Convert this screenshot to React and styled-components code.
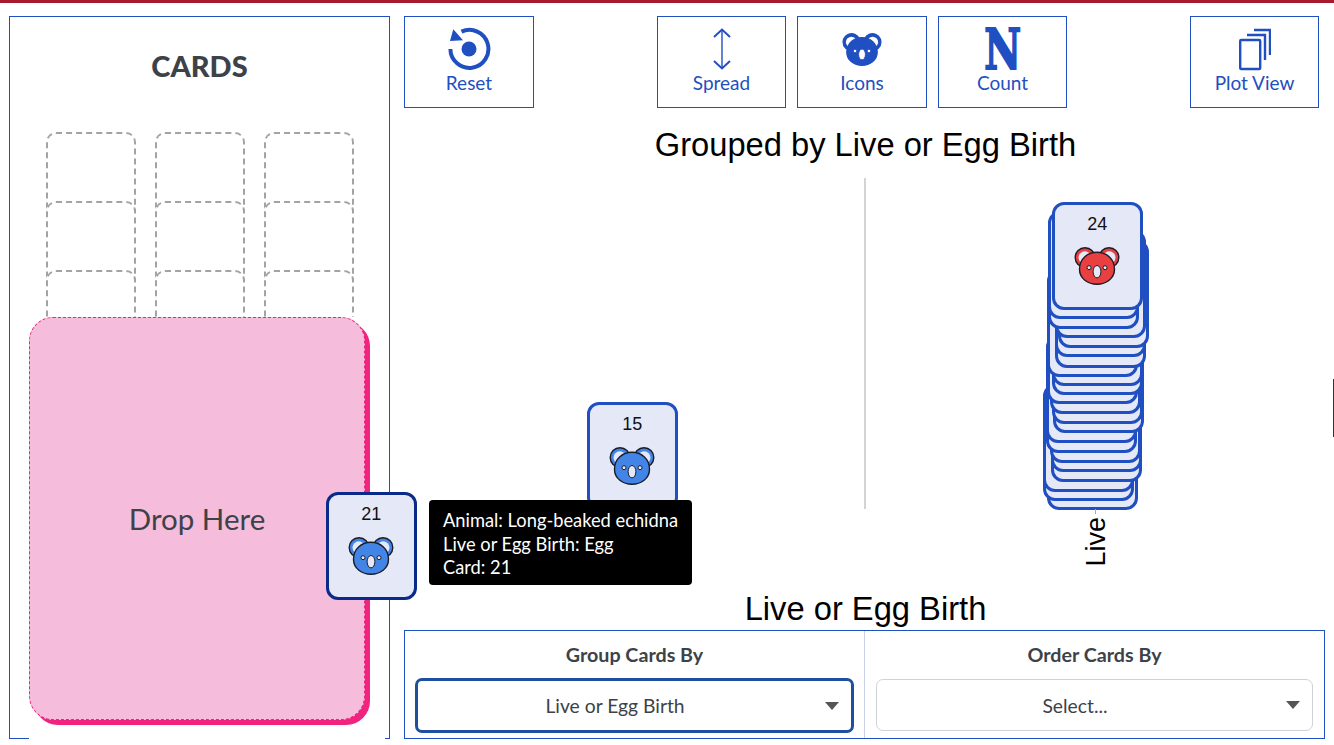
import styled, { createGlobalStyle } from "styled-components"

const BLUE = "#1f4fc0"
const INK = "#3d4248"
const UI_FONT = `Lato, "Noto Sans", sans-serif`
const CHART_FONT = `"Liberation Sans", Arial, sans-serif`

const GlobalStyle = createGlobalStyle`
  html, body {
    margin: 0;
    padding: 0;
    background: #fff;
    overflow: hidden;
  }
  * { box-sizing: border-box; }
`

// x = left edge, bottom = bottom edge, in page pixels. back of the stack first
const liveCards = [
  [1047, 509], [1043, 500], [1043, 491], [1051, 481], [1051, 471], [1050, 462],
  [1046, 452], [1046, 442], [1053, 432], [1052, 423], [1050, 413], [1047, 403],
  [1052, 394], [1052, 385], [1047, 376], [1055, 367], [1055, 356], [1058, 347],
  [1055, 337], [1048, 328], [1048, 318],
]

const LIVE_LEFT = 866

const KoalaFace = ({ color, earColor, line, width = 46, height = 38 }) => (
  <svg width={width} height={height} viewBox="0 0 46 38">
    <circle cx="11" cy="10.5" r="9.8" fill={color} stroke={line} strokeWidth="1.4" />
    <circle cx="35" cy="10.5" r="9.8" fill={color} stroke={line} strokeWidth="1.4" />
    <circle cx="10.8" cy="10.6" r="6.3" fill={earColor} />
    <circle cx="35.2" cy="10.6" r="6.3" fill={earColor} />
    <path
      d="M23 5.2C32 5.2 40.5 11.5 40.5 22.2C40.5 31.5 32 37.2 23 37.2C14 37.2 5.5 31.5 5.5 22.2C5.5 11.5 14 5.2 23 5.2Z"
      fill={color}
      stroke={line}
      strokeWidth="1.4"
    />
    <circle cx="15" cy="20.7" r="2" fill={earColor} stroke={line} strokeWidth="1" />
    <circle cx="31" cy="20.7" r="2" fill={earColor} stroke={line} strokeWidth="1" />
    <ellipse cx="23" cy="24.7" rx="3.9" ry="6.2" fill={earColor} stroke={line} strokeWidth="1" />
  </svg>
)

const ResetIcon = () => (
  <svg width="44" height="44" viewBox="0 0 44 44">
    <path d="M3.4 22A19 19 0 1 0 14.5 4.6" fill="none" stroke={BLUE} strokeWidth="4" />
    <path d="M6.3 2.3L3 14L16 13.3Z" fill={BLUE} />
    <circle cx="22" cy="22" r="7.5" fill={BLUE} />
  </svg>
)

const SpreadIcon = () => (
  <svg width="20" height="44" viewBox="0 0 20 44" fill="none" stroke={BLUE}>
    <path d="M10 3V41" strokeWidth="1.4" />
    <path d="M2 10L10 2.5L18 10M2 34L10 41.5L18 34" strokeWidth="2" />
  </svg>
)

const PlotViewIcon = () => (
  <svg width="32" height="44" viewBox="0 0 32 44" fill="none" stroke={BLUE} strokeWidth="2.4">
    <rect x="1.2" y="13" width="20" height="29" rx="1" />
    <path d="M8 8H26V33M15 3H31V28" />
  </svg>
)

const Card = ({ number, color, $x, $y, $active }) => (
  <CardBox $x={$x} $y={$y} $active={$active}>
    <CardNumber>{number}</CardNumber>
    <KoalaFace color={color} earColor="#e5e8f7" line="#1c1c28" />
  </CardBox>
)

const App = () => {
  const slots = Array.from({ length: 9 }, (_, i) => i)

  return (
    <Page>
      <GlobalStyle />
      <TopBar />
      <Main>
        <CardsPanel>
          <PanelHeading>CARDS</PanelHeading>
          <SlotGrid>
            {slots.map((s) => (
              <Slot key={s} />
            ))}
          </SlotGrid>
          <DropShell>
            <DropZone>Drop Here</DropZone>
          </DropShell>
        </CardsPanel>

        <Workspace>
          <Toolbar>
            <ToolButton $w={130}>
              <IconBox><ResetIcon /></IconBox>
              Reset
            </ToolButton>
            <ToolGroup>
              <ToolButton $w={129}>
                <IconBox><SpreadIcon /></IconBox>
                Spread
              </ToolButton>
              <ToolButton $w={130}>
                <IconBox>
                  <KoalaFace color={BLUE} earColor="#fff" line={BLUE} width={40} height={35} />
                </IconBox>
                Icons
              </ToolButton>
              <ToolButton $w={129}>
                <IconBox><CountGlyph>N</CountGlyph></IconBox>
                Count
              </ToolButton>
            </ToolGroup>
            <ToolButton $w={129}>
              <IconBox><PlotViewIcon /></IconBox>
              Plot View
            </ToolButton>
          </Toolbar>

          <ChartTitle>Grouped by Live or Egg Birth</ChartTitle>

          <Plot>
            <PlotColumn $divider>
              <Card number="15" color="#4285e6" $x={587 - 404} $y={224} />
            </PlotColumn>
            <PlotColumn>
              {liveCards.map(([x, bottom], i) => (
                <Card key={i} number="" color="#e84040" $x={x - LIVE_LEFT} $y={bottom - 107 - 178} />
              ))}
              <Card number="24" color="#e84040" $x={1052 - LIVE_LEFT} $y={24} />
              <Tick />
              <GroupLabel>Live</GroupLabel>
            </PlotColumn>
          </Plot>

          <AxisTitle>Live or Egg Birth</AxisTitle>

          <Controls>
            <ControlCell $divider>
              <ControlLabel>Group Cards By</ControlLabel>
              <SelectBox $focused>
                <SelectValue>Live or Egg Birth</SelectValue>
                <Caret />
              </SelectBox>
            </ControlCell>
            <ControlCell>
              <ControlLabel>Order Cards By</ControlLabel>
              <SelectBox>
                <SelectValue>Select...</SelectValue>
                <Caret />
              </SelectBox>
            </ControlCell>
          </Controls>
        </Workspace>
      </Main>

      <Card number="21" color="#4285e6" $x={326} $y={492} $active />
      <Tooltip>
        <div>Animal: Long-beaked echidna</div>
        <div>Live or Egg Birth: Egg</div>
        <div>Card: 21</div>
      </Tooltip>
      <EdgeMark />
    </Page>
  )
}

const Page = styled.div`
  position: relative;
  width: 1334px;
  height: 745px;
  overflow: hidden;
  font-family: ${UI_FONT};
  color: ${INK};
`

const TopBar = styled.div`
  height: 3px;
  background: #a6192e;
`

const Main = styled.div`
  display: flex;
  gap: 14px;
  padding: 13px 9px 0 9px;
`

const CardsPanel = styled.section`
  position: relative;
  width: 381px;
  height: 723px;
  border: 1px solid ${BLUE};
  display: flex;
  flex-direction: column;
  align-items: center;
`

const PanelHeading = styled.h2`
  margin: 28px 0 0;
  height: 42px;
  font-size: 29px;
  line-height: 42px;
  font-weight: 900;
  color: ${INK};
`

const SlotGrid = styled.div`
  display: grid;
  grid-template-columns: repeat(3, 90px);
  grid-auto-rows: 69px;
  column-gap: 19px;
  margin-top: 45px;
`

const Slot = styled.div`
  height: 108px;
  background: #fff;
  border: 2px dashed #a3a3a3;
  border-radius: 10px;
`

const DropShell = styled.div`
  position: absolute;
  left: 19px;
  top: 300px;
  width: 356px;
  height: 430px;
  background: #fff;
`

const DropZone = styled.div`
  width: 336px;
  height: 403px;
  display: flex;
  align-items: center;
  justify-content: center;
  background: #f5bcdb;
  border: 1px dashed #f0237f;
  border-radius: 24px;
  box-shadow: 5px 5px 0 #f0237f;
  font-size: 29.5px;
  color: ${INK};
`

const Workspace = styled.div`
  width: 921px;
  display: flex;
  flex-direction: column;
`

const Toolbar = styled.div`
  display: flex;
  justify-content: space-between;
  padding-right: 6px;
`

const ToolGroup = styled.div`
  display: flex;
  gap: 11px;
`

const ToolButton = styled.button`
  width: ${(p) => p.$w}px;
  height: 92px;
  padding: 10px 0 0;
  display: flex;
  flex-direction: column;
  align-items: center;
  background: #fff;
  border: 1px solid ${BLUE};
  border-radius: 0;
  font-family: ${UI_FONT};
  font-size: 19px;
  line-height: 23px;
  color: ${BLUE};
`

const IconBox = styled.span`
  height: 44px;
  display: flex;
  align-items: center;
  justify-content: center;
`

const CountGlyph = styled.span`
  font-family: "DejaVu Serif", serif;
  font-weight: 700;
  font-size: 56px;
  line-height: 44px;
  color: ${BLUE};
  -webkit-text-stroke: 2px ${BLUE};
  transform: scaleX(0.72);
`

const ChartTitle = styled.h1`
  margin: 0;
  height: 70px;
  padding: 16px 0 0 2px;
  text-align: center;
  font-family: ${CHART_FONT};
  font-size: 32.7px;
  line-height: 42px;
  font-weight: 400;
  color: #000;
`

const Plot = styled.div`
  display: grid;
  grid-template-columns: 462px 459px;
  height: 331px;
`

const PlotColumn = styled.div`
  position: relative;
  border-right: ${(p) => (p.$divider ? "2px solid #d4d4d4" : "none")};
`

const CardBox = styled.div`
  position: absolute;
  left: ${(p) => p.$x}px;
  top: ${(p) => p.$y}px;
  width: 90.5px;
  height: 108px;
  display: flex;
  flex-direction: column;
  align-items: center;
  background: #e5e8f7;
  border: 3px solid ${(p) => (p.$active ? "#0a2a8a" : BLUE)};
  border-radius: 12px;
`

const CardNumber = styled.div`
  height: 42px;
  padding-top: 9px;
  font-family: ${CHART_FONT};
  font-size: 18px;
  line-height: 21px;
  color: #111;
`

const Tick = styled.div`
  position: absolute;
  left: 229px;
  top: 331px;
  width: 1px;
  height: 5px;
  background: #aaa;
`

const GroupLabel = styled.div`
  position: absolute;
  left: 213px;
  top: 339px;
  writing-mode: vertical-rl;
  transform: rotate(180deg);
  font-family: ${CHART_FONT};
  font-size: 27px;
  line-height: 34px;
  color: #000;
`

const AxisTitle = styled.div`
  height: 121px;
  padding: 82px 0 0 2px;
  text-align: center;
  font-family: ${CHART_FONT};
  font-size: 32.7px;
  line-height: 36px;
  color: #000;
`

const Controls = styled.div`
  display: grid;
  grid-template-columns: 460px 1fr;
  height: 109px;
  border: 1px solid ${BLUE};
  background: #fff;
`

const ControlCell = styled.div`
  display: flex;
  flex-direction: column;
  align-items: center;
  padding: 0 11px;
  border-right: ${(p) => (p.$divider ? "1px solid #c6d0ea" : "none")};
`

const ControlLabel = styled.div`
  height: 47px;
  padding-top: 12px;
  font-size: 19.7px;
  line-height: 24px;
  font-weight: 700;
  color: ${INK};
`

const SelectBox = styled.div`
  width: ${(p) => (p.$focused ? "439px" : "437px")};
  height: ${(p) => (p.$focused ? "55px" : "52px")};
  margin-top: ${(p) => (p.$focused ? "0" : "1px")};
  display: flex;
  align-items: center;
  background: #fff;
  border: ${(p) => (p.$focused ? `3px solid #1f4f9f` : "1px solid #cfd2d8")};
  border-radius: 7px;
`

const SelectValue = styled.div`
  flex: 1;
  text-align: center;
  font-size: 19.3px;
  color: ${INK};
`

const Caret = styled.div`
  width: 0;
  height: 0;
  margin: 0 12px 0 13px;
  border-left: 7px solid transparent;
  border-right: 7px solid transparent;
  border-top: 8px solid #555;
`

const Tooltip = styled.div`
  position: absolute;
  left: 429px;
  top: 500px;
  width: 263px;
  height: 85px;
  padding: 9px 14px;
  background: #000;
  border-radius: 4px;
  color: #fff;
  font-size: 18.3px;
  line-height: 23.5px;
`

const EdgeMark = styled.div`
  position: absolute;
  right: 0;
  top: 379px;
  width: 1px;
  height: 58px;
  background: #333;
`

export default App
